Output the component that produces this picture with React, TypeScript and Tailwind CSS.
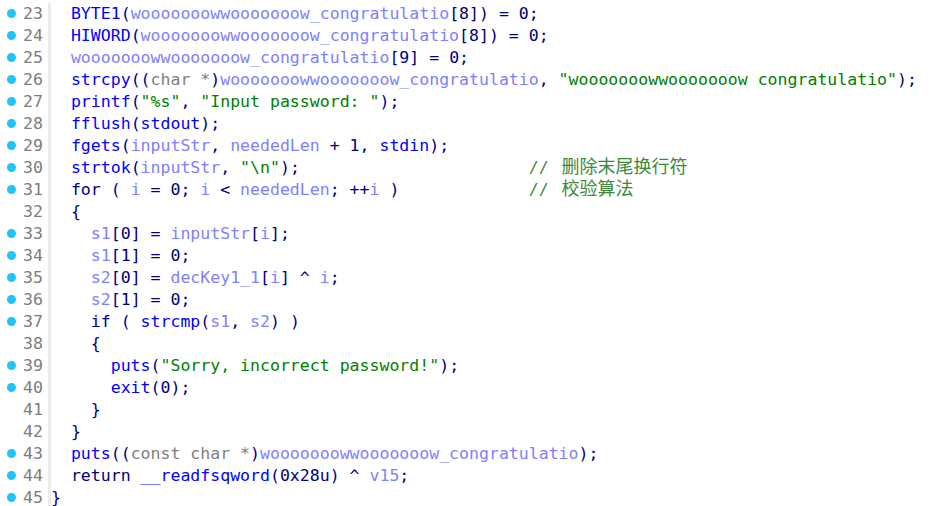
import React from 'react';

const W = 'wooooooowwooooooow_congratulatio';

// pseudocode listing, line number -> [source, has breakpoint dot]
const lines: [number, string, string?][] = [
  [23, `  BYTE1(${W}[8]) = 0;`],
  [24, `  HIWORD(${W}[8]) = 0;`],
  [25, `  ${W}[9] = 0;`],
  [26, `  strcpy((char *)${W}, "wooooooowwooooooow congratulatio");`],
  [27, `  printf("%s", "Input password: ");`],
  [28, `  fflush(stdout);`],
  [29, `  fgets(inputStr, neededLen + 1, stdin);`],
  [30, `  strtok(inputStr, "\\n");`, '删除末尾换行符'],
  [31, `  for ( i = 0; i < neededLen; ++i )`, '校验算法'],
  [32, `  {`],
  [33, `    s1[0] = inputStr[i];`],
  [34, `    s1[1] = 0;`],
  [35, `    s2[0] = decKey1_1[i] ^ i;`],
  [36, `    s2[1] = 0;`],
  [37, `    if ( strcmp(s1, s2) )`],
  [38, `    {`],
  [39, `      puts("Sorry, incorrect password!");`],
  [40, `      exit(0);`],
  [41, `    }`],
  [42, `  }`],
  [43, `  puts((const char *)${W});`],
  [44, `  return __readfsqword(0x28u) ^ v15;`],
  [45, `}`],
];

const noDot = new Set([32, 38, 41, 42]);

const FN = new Set([
  'BYTE1', 'HIWORD', 'strcpy', 'printf', 'fflush', 'fgets', 'strtok',
  'strcmp', 'puts', 'exit', '__readfsqword', 'stdout', 'stdin',
]);
const KW = new Set(['for', 'if', 'return']);

const colors = {
  fn: 'text-[#0000ff]',
  kw: 'text-[#000080]',
  var: 'text-[#8080ff]',
  str: 'text-[#008000]',
  type: 'text-[#808080]',
  def: 'text-[#000080]',
};

type Kind = keyof typeof colors;

function tokenize(src: string): [string, Kind][] {
  const re = /("(?:[^"\\]|\\.)*")|((?:const )?char \*)|(\d\w*)|([A-Za-z_]\w*)|(\s+)|(.)/g;
  const out: [string, Kind][] = [];
  let m: RegExpExecArray | null;
  while ((m = re.exec(src))) {
    if (m[1]) out.push([m[1], 'str']);
    else if (m[2]) out.push([m[2], 'type']);
    else if (m[3]) out.push([m[3], 'def']);
    else if (m[4]) {
      const id = m[4];
      out.push([id, FN.has(id) ? 'fn' : KW.has(id) ? 'kw' : 'var']);
    } else out.push([m[0], 'def']);
  }
  return out;
}

const COMMENT_COL = 48;

export default function App() {
  return (
    <div
      className="w-[950px] h-[506px] overflow-hidden bg-white pt-[3px] text-[16.55px] leading-[22px]"
      style={{ fontFamily: '"DejaVu Sans Mono", "Noto Sans CJK SC", monospace' }}
    >
      {lines.map(([num, src, comment]) => (
        <div key={num} className="flex h-[22px]">
          <div className="w-[51px] shrink-0 flex items-start border-r-[3px] border-[#ebebeb]">
            <div className="w-[7px]" />
            {noDot.has(num) ? (
              <div className="w-[9px]" />
            ) : (
              <div className="w-[9px] h-[9px] mt-[6px] rounded-full bg-[#21c4f6]" />
            )}
            <div className="flex-1 text-right pr-[5px] text-[#7c7c7c]">{num}</div>
          </div>
          <div className="whitespace-pre">
            {tokenize(src).map(([t, k], i) => (
              <span key={i} className={colors[k]}>
                {t}
              </span>
            ))}
            {comment && (
              <span className="text-[#3b8b3b]">
                {' '.repeat(Math.max(1, COMMENT_COL - src.length))}
                {'// '}
                <span className="ml-[3px] text-[18px] leading-none">{comment}</span>
              </span>
            )}
          </div>
        </div>
      ))}
    </div>
  );
}
